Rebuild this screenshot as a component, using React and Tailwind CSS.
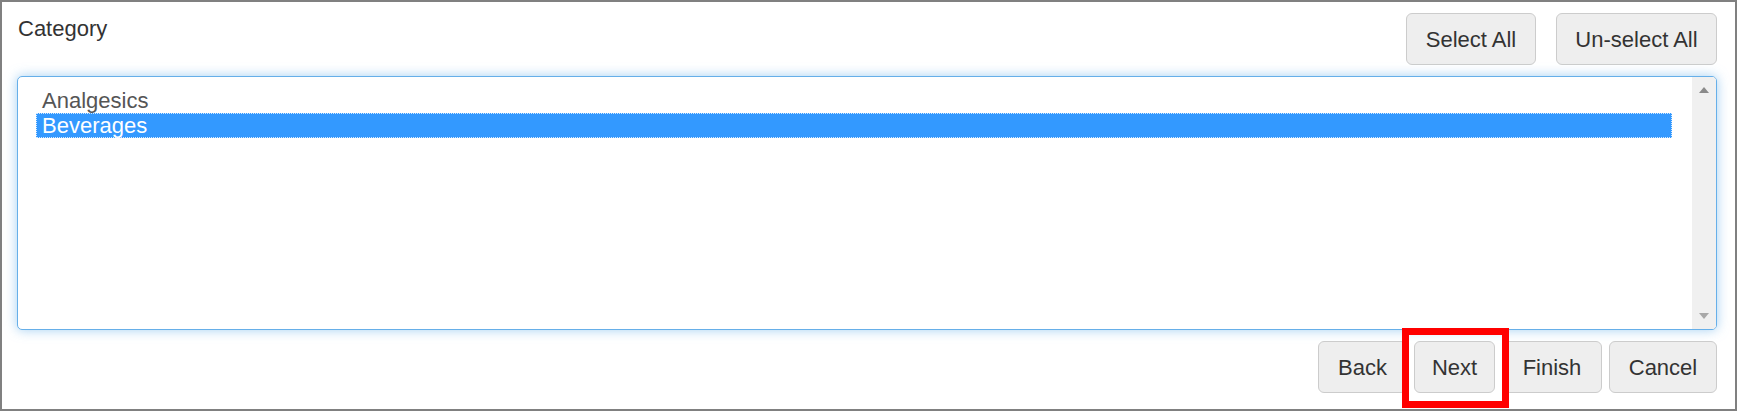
import React from 'react'

const font = { fontFamily: '"Liberation Sans", Arial, sans-serif' }

const OPTIONS = ['Analgesics', 'Beverages']

function Btn({ label, w }) {
  return (
    <button
      type="button"
      className={`h-[52px] ${w} shrink-0 rounded-[6px] border border-[#cccccc] bg-[#eeeeee] text-[22px] leading-[25px] text-[#333333] flex items-center justify-center`}
    >
      {label}
    </button>
  )
}

export default function App() {
  const selected = 'Beverages'
  return (
    <div style={font} className="relative w-[1737px] h-[411px] bg-white border-2 border-[#808080] pl-[15px] pr-[18px] pt-[11px] flex flex-col">
      <div className="flex items-start justify-between">
        <div className="mt-[3px] ml-px text-[22px] leading-[25px] text-[#333333]">Category</div>
        <div className="flex gap-[20px]">
          <Btn label="Select All" w="w-[130px]" />
          <Btn label="Un-select All" w="w-[161px]" />
        </div>
      </div>

      {/* list box */}
      <div className="mt-[11px] h-[254px] flex rounded-[5px] border border-[#66afe9] bg-white shadow-[0_0_12px_rgba(102,175,233,0.6)] overflow-hidden">
        <div className="flex-1 pl-[18px] pr-[20px] pt-[11px]">
          {OPTIONS.map(o => (
            <div
              key={o}
              className={`h-[25px] pl-[5px] text-[22px] leading-[23px] border border-dotted ${o === selected ? 'bg-[#3399ff] text-white border-[#d6eaff]' : 'text-[#555555] border-transparent'}`}
            >
              {o}
            </div>
          ))}
        </div>
        <div className="w-[24px] bg-[#f0f0f0] flex flex-col items-center justify-between py-[10px]">
          <svg width="10" height="6" viewBox="0 0 10 6"><polygon points="0,6 10,6 5,0" fill="#8a8a8a" /></svg>
          <svg width="10" height="6" viewBox="0 0 10 6"><polygon points="0,0 10,0 5,6" fill="#a8a8a8" /></svg>
        </div>
      </div>

      <div className="mt-[11px] flex justify-end gap-[7px]">
        <Btn label="Back" w="w-[89px]" />
        <Btn label="Next" w="w-[81px]" />
        <Btn label="Finish" w="w-[100px]" />
        <Btn label="Cancel" w="w-[108px]" />
      </div>

      {/* annotation highlight */}
      <div className="absolute left-[1400px] top-[326px] w-[107px] h-[80px] border-[7px] border-[#ff0000]" />
    </div>
  )
}
